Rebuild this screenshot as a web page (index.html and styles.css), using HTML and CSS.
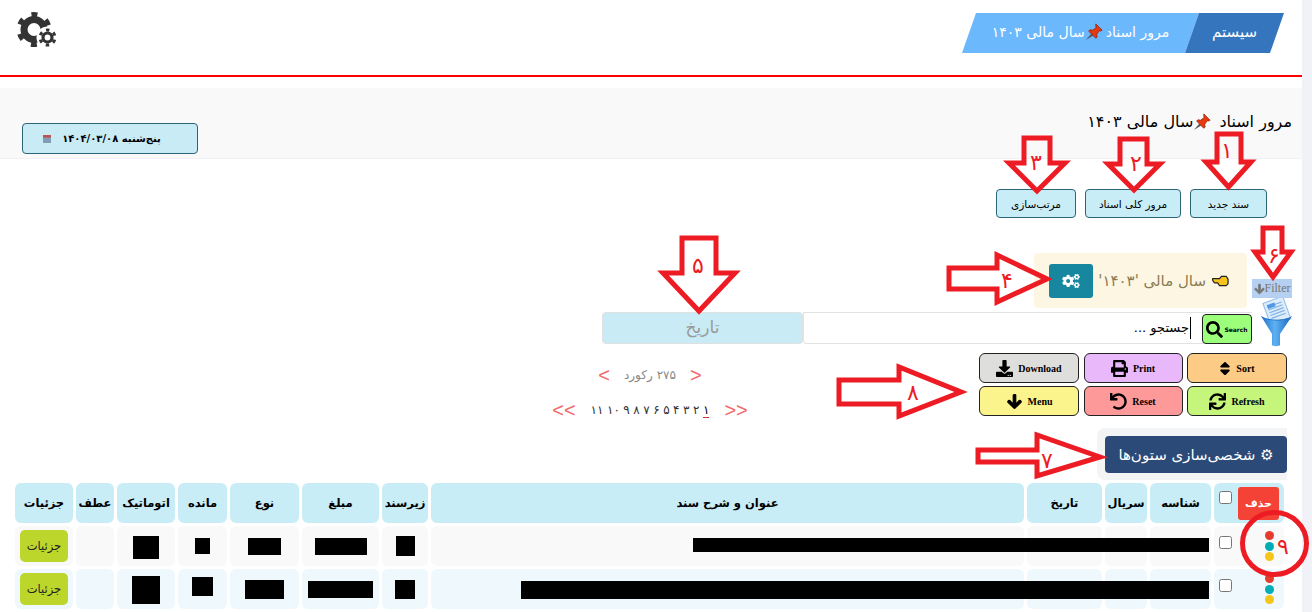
FILE: index.html
```html
<!DOCTYPE html>
<html lang="fa" dir="rtl">
<head>
  <meta charset="UTF-8">
  <meta name="viewport" content="width=device-width, initial-scale=1.0">
  <title>مرور اسناد</title>
  <link rel="stylesheet" href="styles.css">
</head>
<body>
  <svg class="defs" width="0" height="0">
    <linearGradient id="funnel-blue" x1="0" x2="1" y1="0" y2="0">
      <stop offset="0" stop-color="#1f6fd0"/>
      <stop offset="0.450" stop-color="#5fb2f2"/>
      <stop offset="1" stop-color="#1762bd"/>
    </linearGradient>
    <symbol id="pin" viewBox="0 0 20 20">
      <path d="M1 19l6-7 2 2z" fill="#555"/>
      <path d="M12 1l7 7-2 1-1-0.500-3 4 0.500 3-1.500 1.500-8-8 1.500-1.500 3 0.500 4-3-0.500-1z" fill="#e8380d" stroke="#8c1d05" stroke-width="0.800"/>
    </symbol>
    <symbol id="fa-search" viewBox="0 0 512 512"><path d="M505 442.700L405.300 343c-4.500-4.500-10.600-7-17-7H372c27.600-35.300 44-79.700 44-128C416 93.100 322.900 0 208 0S0 93.100 0 208s93.100 208 208 208c48.300 0 92.700-16.400 128-44v16.300c0 6.400 2.500 12.500 7 17l99.700 99.700c9.400 9.400 24.600 9.400 33.900 0l28.300-28.300c9.400-9.400 9.400-24.600.1-34zM208 336c-70.700 0-128-57.200-128-128 0-70.700 57.200-128 128-128 70.700 0 128 57.200 128 128 0 70.700-57.200 128-128 128z"/></symbol>
    <symbol id="fa-down" viewBox="-20 -20 488 552"><path d="M413.100 222.500l22.200 22.200c9.400 9.400 9.400 24.600 0 33.900L241 473c-9.400 9.400-24.600 9.400-33.900 0L12.700 278.600c-9.400-9.400-9.400-24.600 0-33.900l22.200-22.200c9.500-9.500 25-9.300 34.300.4L184 343.400V56c0-13.300 10.700-24 24-24h32c13.300 0 24 10.700 24 24v287.400l114.800-120.500c9.300-9.800 24.800-10 34.300-.4z"/></symbol>
  </svg>

  <div class="page">
    <header class="topbar">
      <nav class="crumbs">
        <a class="crumb crumb-root">سیستم</a>
        <a class="crumb crumb-here">مرور اسناد <svg class="pin"><use href="#pin"/></svg>سال مالی ۱۴۰۳</a>
      </nav>
      <svg class="gears" viewBox="0 0 42 38">
        <g fill="none" stroke="#333">
          <circle cx="18" cy="18.500" r="10" stroke-width="7"/>
          <circle cx="18" cy="18.500" r="15" stroke-width="5" stroke-dasharray="6 9.700" stroke-dashoffset="-4.850"/>
        </g>
        <circle cx="31.500" cy="26.500" r="11" fill="#fff"/>
        <g fill="none" stroke="#333">
          <circle cx="31.500" cy="26.500" r="4.500" stroke-width="3.200"/>
          <circle cx="31.500" cy="26.500" r="7.500" stroke-width="3" stroke-dasharray="3.400 4.450" stroke-dashoffset="-2.200"/>
        </g>
      </svg>
    </header>

    <section class="titlebar">
      <h1 class="page-title">مرور اسناد <svg class="pin pin-title"><use href="#pin"/></svg>سال مالی ۱۴۰۳</h1>
      <button class="date-btn">
        <span>پنج‌شنبه ۱۴۰۴/۰۳/۰۸</span>
        <svg class="cal" viewBox="0 0 8 8">
          <rect y="1" width="8" height="7" fill="#7f9db5"/>
          <rect width="8" height="2.500" fill="#c0504d"/>
        </svg>
      </button>
    </section>

    <div class="actions">
      <button class="act act-new">سند جدید</button>
      <button class="act act-all">مرور کلی اسناد</button>
      <button class="act act-sort">مرتب‌سازی</button>
    </div>

    <div class="filter-row">
      <a class="filter-link" dir="ltr"><svg class="filter-arrow"><use href="#fa-down"/></svg>Filter</a>
      <div class="year-box">
        <svg class="hand" viewBox="0 0 18 12">
          <path d="M1 3.500h7l2-2.500h5l2 3v5l-2 2H8l-2-3H3C1 6.500 0 4 1 3.500z" fill="#f6c21c" stroke="#222" stroke-width="1.300"/>
        </svg>
        <span class="year-text">سال مالی '۱۴۰۳'</span>
        <button class="year-btn">
          <svg viewBox="0 0 640 512" width="18" height="14" fill="#fff"><path d="M512.100 191l-8.200 14.300c-3 5.300-9.400 7.500-15.100 5.400-11.800-4.400-22.600-10.700-32.100-18.600-4.600-3.800-5.800-10.500-2.800-15.700l8.200-14.300c-6.900-8-12.300-17.300-15.900-27.400h-16.500c-6 0-11.200-4.300-12.200-10.300-2-12-2.100-24.600 0-37.100 1-6 6.200-10.400 12.200-10.400h16.500c3.600-10.100 9-19.400 15.900-27.400l-8.200-14.300c-3-5.200-1.900-11.900 2.800-15.700 9.500-7.900 20.400-14.200 32.100-18.600 5.700-2.100 12.100.1 15.100 5.400l8.200 14.300c10.500-1.900 21.200-1.900 31.700 0L552 6.300c3-5.300 9.400-7.500 15.100-5.400 11.800 4.400 22.600 10.700 32.100 18.600 4.600 3.800 5.800 10.500 2.800 15.700l-8.200 14.300c6.900 8 12.300 17.300 15.900 27.400h16.500c6 0 11.200 4.300 12.200 10.300 2 12 2.100 24.600 0 37.100-1 6-6.200 10.400-12.200 10.400h-16.500c-3.600 10.100-9 19.400-15.900 27.400l8.200 14.300c3 5.200 1.900 11.900-2.800 15.700-9.500 7.900-20.400 14.200-32.100 18.600-5.700 2.100-12.100-.1-15.100-5.400l-8.200-14.300c-10.400 1.900-21.200 1.900-31.700 0zm-10.500-58.800c38.500 29.600 82.400-14.300 52.800-52.800-38.500-29.700-82.400 14.300-52.800 52.800zM386.300 286.100l33.700 16.800c10.100 5.800 14.500 18.100 10.500 29.100-8.900 24.200-26.400 46.400-42.600 65.800-7.400 8.900-20.200 11.100-30.300 5.300l-29.100-16.800c-16 13.700-34.600 24.600-54.900 31.700v33.600c0 11.600-8.300 21.600-19.700 23.600-24.600 4.200-50.400 4.400-75.900 0-11.500-2-20-11.900-20-23.600V418c-20.300-7.200-38.900-18-54.900-31.700L74 403c-10 5.800-22.900 3.600-30.300-5.300-16.200-19.400-33.300-41.600-42.200-65.700-4-10.900.4-23.200 10.500-29.100l33.300-16.800c-3.900-20.900-3.900-42.400 0-63.400L12 205.800c-10.100-5.800-14.600-18.100-10.500-29 8.900-24.200 26-46.400 42.200-65.800 7.400-8.900 20.200-11.100 30.300-5.300l29.100 16.800c16-13.700 34.600-24.600 54.900-31.700V57.100c0-11.500 8.200-21.500 19.600-23.500 24.600-4.200 50.500-4.400 76-.1 11.500 2 20 11.900 20 23.600v33.600c20.300 7.200 38.900 18 54.900 31.700l29.100-16.800c10-5.800 22.900-3.600 30.300 5.300 16.200 19.400 33.200 41.600 42.100 65.800 4 10.900.1 23.200-10 29.100l-33.700 16.800c3.900 21 3.900 42.500 0 63.500zm-117.600 21.100c59.200-77-28.700-164.900-105.700-105.700-59.200 77 28.700 164.900 105.700 105.700zm243.400 182.700l-8.200 14.300c-3 5.300-9.400 7.500-15.100 5.400-11.800-4.400-22.600-10.700-32.100-18.600-4.600-3.800-5.800-10.500-2.800-15.700l8.200-14.300c-6.900-8-12.300-17.300-15.900-27.400h-16.500c-6 0-11.200-4.300-12.200-10.300-2-12-2.100-24.600 0-37.100 1-6 6.200-10.400 12.200-10.400h16.500c3.600-10.100 9-19.400 15.900-27.400l-8.200-14.300c-3-5.200-1.900-11.900 2.800-15.700 9.500-7.900 20.400-14.200 32.100-18.600 5.700-2.100 12.100.1 15.100 5.400l8.200 14.300c10.500-1.900 21.200-1.900 31.700 0l8.200-14.300c3-5.300 9.400-7.500 15.100-5.400 11.800 4.400 22.600 10.700 32.100 18.600 4.600 3.800 5.800 10.500 2.800 15.700l-8.200 14.300c6.900 8 12.300 17.300 15.900 27.400h16.500c6 0 11.200 4.300 12.200 10.300 2 12 2.100 24.600 0 37.100-1 6-6.200 10.400-12.200 10.400h-16.500c-3.600 10.100-9 19.400-15.900 27.400l8.200 14.300c3 5.200 1.900 11.900-2.800 15.700-9.500 7.900-20.400 14.200-32.100 18.600-5.700 2.100-12.100-.1-15.100-5.400l-8.200-14.300c-10.400 1.900-21.200 1.900-31.700 0zM501.600 431c38.500 29.600 82.400-14.300 52.800-52.800-38.500-29.600-82.400 14.300-52.800 52.800z"/></svg>
        </button>
      </div>
    </div>

    <div class="search-row">
      <svg class="funnel" viewBox="0 0 31 50">
        <g transform="rotate(-20 16 12)">
          <rect x="5" y="1" width="21" height="24" fill="#dcecfb" stroke="#8fbdea"/>
          <path d="M8 6h15M8 9h15M8 12h15M8 15h15M8 18h15" stroke="#7fb2e6" stroke-width="1.200"/>
          <rect x="8" y="4" width="8" height="4" fill="#4f98e4"/>
        </g>
        <path d="M0 18l11 18v11c0 1.500 8 1.500 8 0V36l12-18c-6 5-25 5-31 0z" fill="url(#funnel-blue)"/>
        <path d="M0 18c7 5 24 5 31 0-3 6-28 6-31 0z" fill="#1f6fd0"/>
      </svg>
      <div class="search-box">
        <button class="search-btn" dir="ltr"><svg class="search-icon"><use href="#fa-search"/></svg><span>Search</span></button>
        <span class="search-text">جستجو ...</span>
      </div>
      <div class="date-field">تاریخ</div>
    </div>

    <div class="tools-row">
      <div class="tools" dir="ltr">
        <button class="tool tool-download">
          <svg class="tool-icon" viewBox="0 0 512 512"><path d="M216 0h80c13.300 0 24 10.700 24 24v168h87.700c17.800 0 26.700 21.500 14.100 34.100L269.700 378.300c-7.500 7.500-19.800 7.500-27.300 0L90.100 226.100c-12.600-12.600-3.700-34.100 14.100-34.100H192V24c0-13.300 10.700-24 24-24zm296 376v112c0 13.300-10.700 24-24 24H24c-13.300 0-24-10.700-24-24V376c0-13.300 10.700-24 24-24h146.700l49 49c20.100 20.100 52.500 20.100 72.600 0l49-49H488c13.300 0 24 10.700 24 24zm-124 88c0-11-9-20-20-20s-20 9-20 20 9 20 20 20 20-9 20-20zm64 0c0-11-9-20-20-20s-20 9-20 20 9 20 20 20 20-9 20-20z"/></svg>
          Download
        </button>
        <button class="tool tool-print">
          <svg class="tool-icon" viewBox="0 0 512 512"><path d="M448 192V77.250c0-8.490-3.370-16.620-9.370-22.630L393.370 9.370c-6-6-14.140-9.370-22.630-9.370H96C78.330 0 64 14.330 64 32v160c-35.350 0-64 28.650-64 64v112c0 8.840 7.160 16 16 16h48v96c0 17.670 14.330 32 32 32h320c17.670 0 32-14.330 32-32v-96h48c8.840 0 16-7.160 16-16V256c0-35.350-28.650-64-64-64zm-64 256H128v-96h256v96zm0-224H128V64h192v48c0 8.840 7.160 16 16 16h48v96zm48 72c-13.250 0-24-10.750-24-24 0-13.260 10.750-24 24-24s24 10.740 24 24c0 13.250-10.750 24-24 24z"/></svg>
          Print
        </button>
        <button class="tool tool-sort">
          <svg class="tool-icon tool-icon-narrow" viewBox="0 0 320 512"><path d="M41 288h238c21.400 0 32.100 25.900 17 41L177 448c-9.400 9.400-24.600 9.400-33.900 0L24 329c-15.100-15.100-4.400-41 17-41zm255-105L177 64c-9.400-9.400-24.600-9.400-33.900 0L24 183c-15.100 15.100-4.400 41 17 41h238c21.400 0 32.100-25.900 17-41z"/></svg>
          Sort
        </button>
        <button class="tool tool-menu">
          <svg class="tool-icon icon-heavy"><use href="#fa-down"/></svg>
          Menu
        </button>
        <button class="tool tool-reset">
          <svg class="tool-icon" viewBox="0 0 512 512"><path d="M212.333 224.333H12c-6.627 0-12-5.373-12-12V12C0 5.373 5.373 0 12 0h48c6.627 0 12 5.373 12 12v78.112C117.773 39.279 184.260 7.470 258.175 8.007c136.906.994 246.448 111.623 246.157 248.532C504.041 393.258 393.120 504 256.333 504c-64.089 0-122.496-24.313-166.510-64.215-5.099-4.622-5.334-12.554-.467-17.420l33.967-33.967c4.474-4.474 11.662-4.717 16.401-.525C170.760 415.336 211.580 432 256.333 432c97.268 0 176-78.716 176-176 0-97.267-78.716-176-176-176-58.496 0-110.280 28.476-142.274 72.333h98.274c6.627 0 12 5.373 12 12v48c0 6.627-5.373 12-12 12z"/></svg>
          Reset
        </button>
        <button class="tool tool-refresh">
          <svg class="tool-icon" viewBox="0 0 512 512"><path d="M440.650 12.570l4 82.770A247.160 247.160 0 0 0 255.830 8C134.730 8 33.910 94.920 12.290 209.820A12 12 0 0 0 24.090 224h49.050a12 12 0 0 0 11.670-9.260 175.910 175.910 0 0 1 317-56.940l-101.460-4.860a12 12 0 0 0-12.570 12v47.410a12 12 0 0 0 12 12H500a12 12 0 0 0 12-12V12a12 12 0 0 0-12-12h-47.370a12 12 0 0 0-11.980 12.570zM255.830 432a175.610 175.610 0 0 1-146-77.800l101.800 4.870a12 12 0 0 0 12.570-12v-47.400a12 12 0 0 0-12-12H12a12 12 0 0 0-12 12V500a12 12 0 0 0 12 12h47.350a12 12 0 0 0 12-12.600l-4.150-82.570A247.170 247.170 0 0 0 255.830 504c121.110 0 221.930-86.920 243.550-201.820a12 12 0 0 0-11.800-14.180h-49.050a12 12 0 0 0-11.670 9.260A175.860 175.860 0 0 1 255.830 432z"/></svg>
          Refresh
        </button>
      </div>
      <div class="pager">
        <div class="pager-line" dir="ltr">
          <a class="pager-nav">&lt;</a>
          <span class="pager-count" dir="rtl">۲۷۵ رکورد</span>
          <a class="pager-nav">&gt;</a>
        </div>
        <div class="pager-line pager-pages" dir="ltr">
          <a class="pager-nav">&lt;&lt;</a>
          <span class="pages" dir="rtl"><a class="current">۱</a><a>۲</a><a>۳</a><a>۴</a><a>۵</a><a>۶</a><a>۷</a><a>۸</a><a>۹</a><a>۱۰</a><a>۱۱</a></span>
          <a class="pager-nav">&gt;&gt;</a>
        </div>
      </div>
    </div>

    <div class="columns-row">
      <div class="columns-wrap">
        <button class="columns-btn">⚙ شخصی‌سازی ستون‌ها</button>
      </div>
    </div>

    <div class="table-wrap">
      <table class="docs">
        <colgroup>
          <col class="c-check"><col class="c-id"><col class="c-serial"><col class="c-date"><col class="c-title"><col class="c-sub"><col class="c-amount"><col class="c-type"><col class="c-rest"><col class="c-auto"><col class="c-ref"><col class="c-info">
        </colgroup>
        <thead>
          <tr>
            <th><div class="pick"><button class="del-btn">حذف</button><input type="checkbox"></div></th>
            <th>شناسه</th><th>سریال</th><th>تاریخ</th><th>عنوان و شرح سند</th><th>زیرسند</th><th>مبلغ</th><th>نوع</th><th>مانده</th><th>اتوماتیک</th><th>عطف</th><th>جزئیات</th>
          </tr>
        </thead>
        <tbody>
          <tr>
            <td><div class="pick"><span class="dots"><i></i><i></i><i></i></span><input type="checkbox"></div></td>
            <td></td><td></td><td></td><td></td>
            <td><span class="mask m-sub1"></span></td>
            <td><span class="mask m-amount1"></span></td>
            <td><span class="mask m-type1"></span></td>
            <td><span class="mask m-rest1"></span></td>
            <td><span class="mask m-auto1"></span></td>
            <td></td>
            <td><button class="info-btn">جزئیات</button></td>
          </tr>
          <tr>
            <td><div class="pick"><span class="dots"><i></i><i></i><i></i></span><input type="checkbox"></div></td>
            <td></td><td></td><td></td><td></td>
            <td><span class="mask m-sub2"></span></td>
            <td><span class="mask m-amount2"></span></td>
            <td><span class="mask m-type2"></span></td>
            <td><span class="mask m-rest2"></span></td>
            <td><span class="mask m-auto2"></span></td>
            <td></td>
            <td><button class="info-btn">جزئیات</button></td>
          </tr>
        </tbody>
      </table>
      <span class="bar bar-one"></span>
      <span class="bar bar-two"></span>
    </div>

    <!-- راهنمای شماره‌دار روی صفحه -->
    <svg class="notes" viewBox="0 0 1312 612">
      <g class="note-shape">
        <path d="M1217 134h24v28h10l-22.500 25-22.500-25h11z"/>
        <path d="M1120 139h27v25h13l-26 26-26-26h12z"/>
        <path d="M1024 138h26v25h15l-28 28-28-28h15z"/>
        <path d="M682 238h34v35h19l-36 38-36-38h19z"/>
        <path d="M949 268h48v-13l50 24-50 23v-13h-48z"/>
        <path d="M1263 228h19v24h9l-18 25-18-25h8z"/>
        <path d="M839 380h60v-13l62 25-62 24v-12h-60z"/>
        <path d="M978 450h59v-15l63 22-63 19v-14h-59z"/>
        <ellipse cx="1274.500" cy="543.500" rx="32" ry="31"/>
      </g>
      <g class="note-num">
        <text x="1227" y="158">۱</text>
        <text x="1136" y="171">۲</text>
        <text x="1036" y="170">۳</text>
        <text x="1007" y="288">۴</text>
        <text x="698" y="273">۵</text>
        <text x="1274" y="263">۶</text>
        <text x="1047" y="468">۷</text>
        <text x="913" y="400">۸</text>
        <text x="1283" y="554">۹</text>
      </g>
    </svg>
  </div>
</body>
</html>
```

FILE: styles.css
```css
html, body {
  margin: 0;
  height: 612px;
  overflow: hidden;
}
body {
  font-family: "DejaVu Sans", sans-serif;
  background-color: #f0f2f8;
  color: #000;
}
button {
  font-family: inherit;
  cursor: pointer;
}
.defs {
  position: absolute;
}
.page {
  position: relative;
  width: 1302px;
  height: 612px;
  margin-right: auto;
  background-color: #fff;
}

/* header */
.topbar {
  display: flex;
  justify-content: space-between;
  height: 75px;
  padding: 0 18px 0 0;
  border-bottom: 2px solid #f00;
  box-sizing: content-box;
}
.crumbs {
  display: flex;
  height: 40px;
  margin-top: 13px;
}
.crumb {
  display: flex;
  align-items: center;
  justify-content: center;
  padding-bottom: 3px;
  box-sizing: border-box;
  color: #fff;
  font-size: 14px;
}
.crumb-root {
  position: relative;
  z-index: 1;
  width: 99px;
  background-color: #3575bd;
  font-size: 15px;
  clip-path: polygon(14px 0, 100% 0, 85px 100%, 0 100%);
}
.crumb-here {
  width: 237px;
  margin-right: -14px;
  background-color: #6cb8fd;
  clip-path: polygon(14px 0, 100% 0, 223px 100%, 0 100%);
}
.pin {
  width: 18px;
  height: 18px;
  margin-right: 3px;
}
.gears {
  width: 42px;
  height: 38px;
  margin: 11px 0 0 16px;
}

/* title band */
.titlebar {
  display: flex;
  justify-content: space-between;
  height: 70px;
  margin-top: 11px;
  padding: 0 10px 0 22px;
  background-color: #f9f9f9;
  border-bottom: 1px solid #f0f0f5;
}
.page-title {
  margin: 23px 0 0;
  font-size: 16px;
  font-weight: normal;
  line-height: 22px;
}
.pin-title {
  vertical-align: -4px;
}
.date-btn {
  display: flex;
  align-items: center;
  justify-content: center;
  gap: 11px;
  width: 176px;
  height: 31px;
  margin-top: 35px;
  padding: 0 16px 0 0;
  background-color: #c9ebf5;
  border: 1px solid #2c6478;
  border-radius: 4px;
  font-size: 10px;
  font-weight: bold;
}
.cal {
  width: 8px;
  height: 8px;
}

/* action buttons */
.actions {
  display: flex;
  gap: 9px;
  margin-top: 30px;
  padding-right: 35px;
}
.act {
  height: 29px;
  padding: 0;
  background-color: #c9edf6;
  border: 1px solid #2c6478;
  border-radius: 4px;
  font-size: 10.500px;
}
.act-new { width: 77px; }
.act-all { width: 96px; }
.act-sort { width: 80px; }

/* filter */
.filter-row {
  display: flex;
  align-items: flex-start;
  gap: 5px;
  height: 55px;
  margin-top: 35px;
  padding-right: 10px;
}
.filter-link {
  display: flex;
  align-items: center;
  justify-content: center;
  width: 40px;
  height: 19px;
  margin-top: 26px;
  background-color: #b5d0f0;
  color: #777;
  font-family: "Liberation Serif", serif;
  font-size: 12px;
}
.filter-arrow {
  width: 11px;
  height: 12px;
  fill: #777;
  stroke: #777;
  stroke-width: 40;
}
.year-box {
  display: flex;
  align-items: center;
  width: 213px;
  height: 55px;
  padding: 0 18px 0 15px;
  box-sizing: border-box;
  background-color: #fdf6e3;
  border-radius: 4px;
}
.hand {
  width: 17px;
  height: 12px;
  margin-left: 6px;
}
.year-text {
  flex: 1;
  color: #8a7b55;
  font-size: 15px;
  letter-spacing: 1px;
  white-space: nowrap;
}
.year-btn {
  display: flex;
  align-items: center;
  justify-content: center;
  width: 44px;
  height: 34px;
  padding: 0;
  background-color: #17869f;
  border: 0;
  border-radius: 3px;
}

/* search */
.search-row {
  display: flex;
  align-items: center;
  height: 50px;
  margin-top: -5px;
  padding-right: 10px;
}
.funnel {
  width: 31px;
  height: 50px;
  margin-top: -10px;
  margin-left: 9px;
}
.search-box {
  display: flex;
  align-items: center;
  width: 449px;
  height: 32px;
  box-sizing: border-box;
  border: 1px solid #e2e2e2;
  border-right: 0;
  border-radius: 0 0 0 4px;
}
.search-btn {
  display: flex;
  align-items: center;
  justify-content: center;
  gap: 1px;
  width: 50px;
  height: 30px;
  margin-top: 2px;
  padding: 0;
  background-color: #9cff7c;
  border: 1px solid #222;
  border-radius: 4px;
  font-size: 6px;
  font-weight: bold;
}
.search-icon {
  width: 17px;
  height: 17px;
}
.search-text {
  margin-right: 11px;
  padding-right: 1px;
  border-right: 1px solid #000;
  font-size: 13px;
  line-height: 22px;
}
.date-field {
  width: 201px;
  height: 32px;
  box-sizing: border-box;
  background-color: #c9ebf5;
  border: 1px solid #e0e0e0;
  border-radius: 4px;
  color: #999;
  font-size: 17px;
  line-height: 28px;
  text-align: center;
}

/* tools + pager */
.tools-row {
  display: flex;
  height: 63px;
  padding-right: 15px;
}
.tools {
  display: grid;
  grid-template-columns: 100px 99px 100px;
  grid-auto-rows: 30px;
  gap: 3px 4.500px;
  width: 308px;
}
.tool {
  display: flex;
  align-items: center;
  justify-content: center;
  gap: 5px;
  padding: 0;
  border: 1px solid #222;
  border-radius: 6px;
  color: #000;
  font-family: "Liberation Serif", serif;
  font-size: 10px;
  font-weight: bold;
}
.tool-icon {
  width: 17px;
  height: 17px;
}
.tool-icon-narrow { width: 12px; }
.icon-heavy {
  stroke: #000;
  stroke-width: 40;
}
.tool-download { background-color: #dededc; }
.tool-print { background-color: #e8b8fb; }
.tool-sort { background-color: #fccb85; }
.tool-menu { background-color: #fbf38c; }
.tool-reset { background-color: #fe9999; }
.tool-refresh { background-color: #c6f57c; }
.pager {
  width: 200px;
  margin-top: 11px;
  margin-right: 229px;
}
.pager-line {
  display: flex;
  align-items: center;
  justify-content: center;
  gap: 14px;
  height: 22px;
  color: #888;
  font-size: 12px;
}
.pager-pages {
  margin-top: 13px;
  gap: 15px;
}
.pager-nav {
  color: #f26a6a;
  font-family: "Liberation Sans", sans-serif;
  font-size: 20px;
}
.pages {
  display: flex;
  gap: 3.500px;
  color: #333;
  font-size: 12px;
}
.current {
  color: #000;
  border-bottom: 1px solid #d03030;
}

/* columns button */
.columns-row {
  display: flex;
  margin-top: 12px;
  padding-right: 15px;
}
.columns-wrap {
  width: 190px;
  height: 52px;
  padding: 8px 0 7px 8px;
  box-sizing: border-box;
  background-color: #f3f4f6;
  border-radius: 8px 0 0 8px;
}
.columns-btn {
  width: 100%;
  height: 37px;
  padding: 0;
  background-color: #2c4a78;
  border: 0;
  border-radius: 4px;
  color: #fff;
  font-size: 15px;
  white-space: nowrap;
}

/* table */
.table-wrap {
  position: relative;
  margin: 0 15px 0 0;
  width: 1275px;
}
.docs {
  width: 1275px;
  table-layout: fixed;
  border-collapse: separate;
  border-spacing: 3px;
}
.c-check { width: 70px; }
.c-id { width: 61px; }
.c-serial { width: 42px; }
.c-date { width: 75px; }
.c-title { width: 593px; }
.c-sub { width: 46px; }
.c-amount { width: 77px; }
.c-type { width: 69px; }
.c-rest { width: 49px; }
.c-auto { width: 58px; }
.c-ref { width: 38px; }
.c-info { width: 58px; }
.docs th, .docs td {
  height: 40px;
  padding: 0;
  box-sizing: border-box;
  border-radius: 6px;
  text-align: center;
  vertical-align: middle;
}
.docs th {
  background-color: #c9edf6;
  font-size: 11.500px;
  font-weight: bold;
  white-space: nowrap;
}
.docs tbody tr:nth-child(odd) td { background-color: #f9f9f9; }
.docs tbody tr:nth-child(even) td { background-color: #eef8fd; }
.pick {
  display: flex;
  align-items: center;
  justify-content: space-between;
  height: 40px;
  padding: 0 5px;
  box-sizing: border-box;
}
.pick input {
  width: 13px;
  height: 13px;
  margin: 0 0 8px;
  accent-color: #666;
}
th .pick input {
  margin-bottom: 12px;
}
.del-btn {
  width: 41px;
  height: 33px;
  padding: 0;
  background-color: #f44336;
  border: 0;
  border-radius: 3px;
  color: #fff;
  font-size: 11px;
  font-weight: bold;
}
.dots {
  display: flex;
  flex-direction: column;
  align-items: center;
  width: 30px;
  gap: 1.500px;
  margin-right: -5px;
}
.dots i {
  width: 9px;
  height: 9px;
  border-radius: 50%;
  background-color: #e53a2e;
}
.dots i:nth-child(2) { background-color: #00acb5; }
.dots i:nth-child(3) { background-color: #f5c518; }
.info-btn {
  width: 48px;
  height: 32px;
  padding: 0;
  background-color: #bdd62c;
  border: 0;
  border-radius: 5px;
  color: #222;
  font-size: 11.500px;
}
.mask {
  display: block;
  margin: 0 auto;
  background-color: #000;
}
.m-sub1 { width: 19px; height: 20px; }
.m-amount1 { width: 52px; height: 17px; }
.m-type1 { width: 33px; height: 17px; }
.m-rest1 { width: 15px; height: 16px; }
.m-auto1 { width: 26px; height: 23px; margin-top: 3px; }
.m-sub2 { width: 20px; height: 19px; }
.m-amount2 { width: 65px; height: 17px; }
.m-type2 { width: 39px; height: 19px; }
.m-rest2 { width: 21px; height: 19px; margin-top: -5px; }
.m-auto2 { width: 28px; height: 28px; margin-top: 2px; }
.bar {
  position: absolute;
  background-color: #000;
}
.bar-one {
  left: 681px;
  top: 58px;
  width: 516px;
  height: 14px;
}
.bar-two {
  left: 509px;
  top: 101px;
  width: 688px;
  height: 18px;
}

/* annotations */
.notes {
  position: absolute;
  left: 0;
  top: 0;
  width: 1312px;
  height: 612px;
  pointer-events: none;
}
.note-shape path, .note-shape ellipse {
  fill: none;
  stroke: #ed1c24;
  stroke-width: 5;
}
.note-num text {
  fill: #ed1c24;
  font-family: "DejaVu Sans", sans-serif;
  font-size: 22px;
  text-anchor: middle;
}
```
